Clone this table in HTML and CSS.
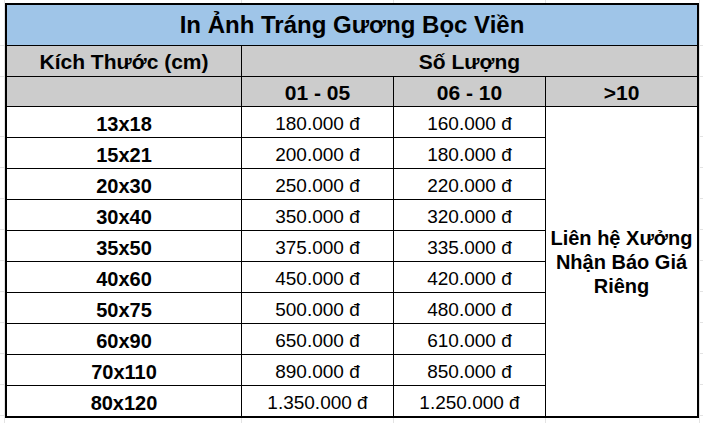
FILE: index.html
```html
<!DOCTYPE html>
<html lang="vi">
<head>
<meta charset="utf-8">
<title>In Ảnh Tráng Gương Bọc Viền</title>
<link rel="stylesheet" href="styles.css">
</head>
<body>
<div class="sheet">
  <div class="cell title span4 end">In Ảnh Tráng Gương Bọc Viền</div>

  <div class="cell head">Kích Thước (cm)</div>
  <div class="cell head span3 end">Số Lượng</div>

  <div class="cell head"></div>
  <div class="cell head">01 - 05</div>
  <div class="cell head">06 - 10</div>
  <div class="cell head end">&gt;10</div>

  <div class="cell size">13x18</div><div class="cell cost">180.000 đ</div><div class="cell cost">160.000 đ</div>
  <div class="cell contact end bottom">Liên hệ Xưởng<br>Nhận Báo Giá<br>Riêng</div>
  <div class="cell size">15x21</div><div class="cell cost">200.000 đ</div><div class="cell cost">180.000 đ</div>
  <div class="cell size">20x30</div><div class="cell cost">250.000 đ</div><div class="cell cost">220.000 đ</div>
  <div class="cell size">30x40</div><div class="cell cost">350.000 đ</div><div class="cell cost">320.000 đ</div>
  <div class="cell size">35x50</div><div class="cell cost">375.000 đ</div><div class="cell cost">335.000 đ</div>
  <div class="cell size">40x60</div><div class="cell cost">450.000 đ</div><div class="cell cost">420.000 đ</div>
  <div class="cell size">50x75</div><div class="cell cost">500.000 đ</div><div class="cell cost">480.000 đ</div>
  <div class="cell size">60x90</div><div class="cell cost">650.000 đ</div><div class="cell cost">610.000 đ</div>
  <div class="cell size">70x110</div><div class="cell cost">890.000 đ</div><div class="cell cost">850.000 đ</div>
  <div class="cell size bottom">80x120</div><div class="cell cost bottom">1.350.000 đ</div><div class="cell cost bottom">1.250.000 đ</div>
</div>
</body>
</html>
```
FILE: styles.css
```css
html {
  background-color: #ffffff;
  background-image:
    linear-gradient(#e3e3e3, #e3e3e3),
    linear-gradient(#e3e3e3, #e3e3e3),
    linear-gradient(#e3e3e3, #e3e3e3),
    linear-gradient(#e3e3e3, #e3e3e3),
    linear-gradient(#e3e3e3, #e3e3e3),
    linear-gradient(#e3e3e3, #e3e3e3),
    linear-gradient(#e3e3e3, #e3e3e3),
    repeating-linear-gradient(to bottom, transparent 0 30px, #e3e3e3 30px 31px);
  background-size:
    1px 100%, 1px 100%, 1px 100%, 1px 100%, 1px 100%,
    100% 1px, 100% 1px,
    100% 100%;
  background-position:
    4px 0, 241px 0, 393px 0, 545px 0, 699px 0,
    0 45px, 0 76px,
    0 106px;
  background-repeat: no-repeat;
  min-height: 100%;
}

body {
  margin: 0;
  padding: 3px 0 0 5px;
  font-family: "Liberation Sans", Arial, sans-serif;
  color: #000;
}

.sheet {
  display: grid;
  grid-template-columns: 235px 152px 152px 151px;
  grid-template-rows: 41px 31px 30px repeat(9, 31px) 30px;
  width: 690px;
  border: 2px solid #000;
  background: #fff;
}

.cell {
  display: flex;
  align-items: center;
  justify-content: center;
  text-align: center;
  box-sizing: border-box;
  border-right: 1px solid #000;
  border-bottom: 1px solid #000;
  white-space: nowrap;
  line-height: 1;
  padding: 0 2px;
}

.end { border-right: 0; }
.bottom { border-bottom: 0; }

.span4 { grid-column: 1 / span 4; }
.span3 { grid-column: 2 / span 3; }

.title {
  background: #9fc5e8;
  font-size: 24px;
  font-weight: bold;
}

.head {
  background: #cccccc;
  font-size: 21px;
  font-weight: bold;
  padding-top: 1px;
}

.size {
  font-size: 20px;
  font-weight: bold;
  padding-top: 3px;
}

.cost {
  font-size: 19px;
  padding-top: 3px;
}

.contact {
  grid-column: 4;
  grid-row: 4 / span 10;
  font-size: 20px;
  font-weight: bold;
  line-height: 24px;
  padding-top: 1px;
}
```
